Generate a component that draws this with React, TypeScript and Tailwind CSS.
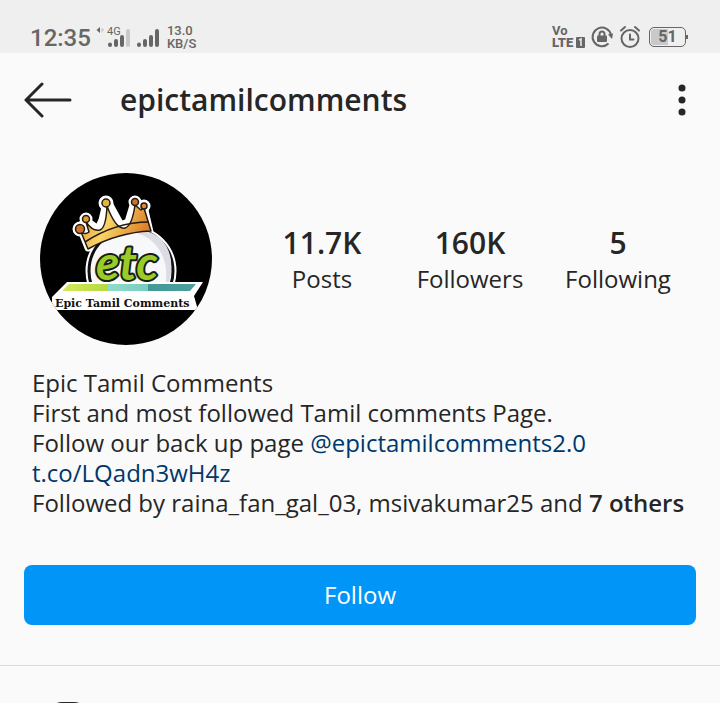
import React from "react";

const stats = [
  { value: "11.7K", label: "Posts" },
  { value: "160K", label: "Followers" },
  { value: "5", label: "Following" },
];

function StatusBar() {
  return (
    <div className="flex h-[53px] items-end justify-between bg-[#efefef] pr-8 pl-[30px] font-[Roboto,sans-serif] text-[#666666]">
      <div className="flex items-end pb-[3px]">
        <time className="text-2xl leading-6 font-medium">12:35</time>
        <svg className="ml-1 h-6 w-[66px]" viewBox="0 0 66 24" role="img" aria-label="4G signal">
          <path d="M5 1v6L1.500 4z" fill="#666" />
          <path d="M6.500 2v5L9 3.500z" fill="#c4c4c4" />
          <text x="12" y="9" fontSize="11" fill="#666">4G</text>
          <g strokeLinecap="round" strokeWidth="4" stroke="#666">
            <path d="M15 18.500v.5M21 15v4M27 11v8M44 18.500v.5M50 15v4M56 11v8M62 5v14" />
            <path d="M33 5v14" stroke="#c9c9c9" />
          </g>
        </svg>
        <div className="ml-[6px] text-[13px] leading-[13px] font-medium">
          <div>13.0</div>
          <div>KB/S</div>
        </div>
      </div>
      <div className="flex items-center pb-1">
        <svg className="h-6 w-[34px] overflow-visible" viewBox="0 0 34 24" role="img" aria-label="VoLTE 1">
          <text x="0" y="10" fontSize="13" fontWeight="700" fill="#666">Vo</text>
          <text x="0" y="22" fontSize="13" fontWeight="900" fill="#666">LTE</text>
          <rect x="24" y="12" width="9" height="11" rx="1" fill="#666" />
          <path d="m27 15 2-1v7" fill="none" stroke="#eee" strokeWidth="1.500" />
        </svg>
        <svg className="ml-1 h-6 w-6" viewBox="0 0 24 24" fill="none" stroke="#666" strokeWidth="2" role="img" aria-label="Rotation locked">
          <path d="M18.500 18.500A9.300 9.300 0 1 1 21 10" />
          <path d="m18 9.500 5-1-1 5.500z" fill="#666" stroke="none" />
          <rect x="7" y="10.500" width="10" height="6.500" rx="1" fill="#666" stroke="none" />
          <path d="M9.500 12V9a2.500 2.500 0 0 1 5 0v3" />
        </svg>
        <svg className="ml-1 h-6 w-6" viewBox="0 0 24 24" fill="none" stroke="#666" strokeWidth="2" strokeLinecap="round" role="img" aria-label="Alarm">
          <circle cx="12" cy="13.500" r="8.500" />
          <path d="M12 9.500v5h3.500M3 5.500 7 2M21 5.500 17 2" />
        </svg>
        <div className="ml-[7px] flex items-center" aria-label="Battery 51 percent">
          <div className="flex h-5 w-[37px] items-center justify-center rounded-[5px] border border-[#666666] bg-[linear-gradient(90deg,#c9c9c9_51%,transparent_51%)] text-base leading-4 font-bold ring-1 ring-[#efefef] ring-inset">
            51
          </div>
          <div className="h-1 w-[2px] bg-[#666666]" />
        </div>
      </div>
    </div>
  );
}

function Avatar() {
  return (
    <svg className="h-[172px] w-[172px] shrink-0 rounded-full bg-black" viewBox="0 0 172 172" role="img" aria-label="Epic Tamil Comments logo">
      <defs>
        <linearGradient id="gold" x1="0" y1="0" x2="1" y2="0.3">
          <stop offset="0" stopColor="#dc8a2e" />
          <stop offset="0.45" stopColor="#f8d568" />
          <stop offset="1" stopColor="#dd8129" />
        </linearGradient>
        <linearGradient id="band" x1="0" y1="0" x2="1" y2="0">
          <stop offset="0" stopColor="#d5e85c" />
          <stop offset="0.34" stopColor="#b5d943" />
          <stop offset="0.34" stopColor="#91dccb" />
          <stop offset="0.64" stopColor="#79cdbf" />
          <stop offset="0.64" stopColor="#419a98" />
          <stop offset="1" stopColor="#4f9f9b" />
        </linearGradient>
        <clipPath id="aboveBanner">
          <rect width="172" height="112" />
        </clipPath>
      </defs>
      <g clipPath="url(#aboveBanner)">
        <g fill="#fff" stroke="#fff" strokeWidth="7" strokeLinejoin="round">
          <circle cx="91" cy="98" r="42" />
          <path d="M48 75 41 57l-1-2 5-9 5 4 8 6 4-9 4-17 4 2 11 20 7-3 6-20 5 4 5 0 6 26z" />
          <circle cx="40" cy="56" r="4" />
          <circle cx="46" cy="46" r="3" />
          <circle cx="66" cy="30" r="4" />
          <circle cx="95" cy="29" r="3" />
          <circle cx="104" cy="33" r="3" />
        </g>
        <circle cx="91" cy="98" r="42" fill="#f8f8fa" stroke="#111" strokeWidth="3" />
        <path d="M94 58c25 5 37 29 33 53 8-27-1-52-33-53" fill="#dcdce4" stroke="#dcdce4" strokeWidth="3" />
        <g stroke="#241b13" strokeWidth="1.500" strokeLinejoin="round">
          <path d="M48 76 41 59q4 3 8 0L46 49q7 10 14 8 6-2 7-24 9 24 18 22 7-2 10-23l6 5 3-2 7 23c-25 1-45 8-63 18z" fill="url(#gold)" />
          <path d="M45 69c20-13 41-20 64-20" fill="none" />
          <circle cx="40" cy="56" r="4.500" fill="#cf742c" />
          <circle cx="46" cy="46" r="3.500" fill="#e09c36" />
          <circle cx="66" cy="30" r="4" fill="#e5b542" />
          <circle cx="95" cy="29" r="3.500" fill="#c4762f" />
          <circle cx="104" cy="33" r="3" fill="#e08b2c" />
        </g>
        <text x="56" y="107" fontSize="48" fontWeight="700" fontStyle="italic" fontFamily="Lato, sans-serif" fill="#9acb29" stroke="#17200f" strokeWidth="4" strokeLinejoin="round" paintOrder="stroke">etc</text>
      </g>
      <path d="m12 124 15-15h136l-9 14 4 14H12z" fill="#fff" />
      <path d="m22 118 7-7h127l-6 7z" fill="url(#band)" />
      <text x="15" y="134" fontSize="11" fontWeight="700" fontFamily="DejaVu Serif, serif" fill="#111">Epic Tamil Comments</text>
    </svg>
  );
}

export default function App() {
  return (
    <div className="h-screen overflow-hidden bg-[#fafafa] font-['Open_Sans',sans-serif] text-[#262626]">
      <StatusBar />
      <header className="flex h-[94px] items-center px-6">
        <button type="button" aria-label="Back">
          <svg className="h-9 w-12" viewBox="0 0 48 36" fill="none" stroke="#262626" strokeWidth="3" strokeLinecap="round" strokeLinejoin="round">
            <path d="M46 18H2M18 2 2 18l16 16" />
          </svg>
        </button>
        <h1 className="ml-12 grow text-[30px] leading-9 font-semibold">epictamilcomments</h1>
        <button type="button" aria-label="More options" className="-mr-1">
          <svg className="h-9 w-9" viewBox="0 0 36 36" fill="#262626">
            <circle cx="18" cy="6" r="3.500" />
            <circle cx="18" cy="18" r="3.500" />
            <circle cx="18" cy="30" r="3.500" />
          </svg>
        </button>
      </header>
      <main>
        <section className="flex items-center pt-[26px] pr-7 pl-10">
          <Avatar />
          <dl className="ml-9 grid grow grid-cols-3 pt-[3px] text-center">
            {stats.map((s) => (
              <div key={s.label} className="flex flex-col-reverse">
                <dt className="text-2xl leading-9 font-medium">{s.label}</dt>
                <dd className="text-[30px] leading-9 font-semibold">{s.value}</dd>
              </div>
            ))}
          </dl>
        </section>
        <section className="px-8 pt-[23px] text-2xl leading-[30px] font-medium whitespace-nowrap">
          <h2>Epic Tamil Comments</h2>
          <p>First and most followed Tamil comments Page.</p>
          <p>
            Follow our back up page <a href="#backup" className="text-[#00376b]">@epictamilcomments2.0</a>
          </p>
          <p>
            <a href="#site" className="text-[#00376b]">t.co/LQadn3wH4z</a>
          </p>
          <p>
            Followed by raina_fan_gal_03, msivakumar25 and <b className="font-semibold">7 others</b>
          </p>
        </section>
        <div className="px-6 pt-[47px] pb-10">
          <button type="button" className="h-[60px] w-full rounded-lg bg-[#0095f6] text-2xl font-medium text-white">
            Follow
          </button>
        </div>
        <nav className="border-t border-[#dbdbdb] px-12 pt-9" aria-label="Profile views">
          <button type="button" aria-label="Posts" className="block">
            <svg className="h-10 w-10" viewBox="0 0 40 40" fill="none" stroke="#262626" strokeWidth="3">
              <rect x="2" y="1.500" width="36" height="36" rx="12" />
            </svg>
          </button>
        </nav>
      </main>
    </div>
  );
}
